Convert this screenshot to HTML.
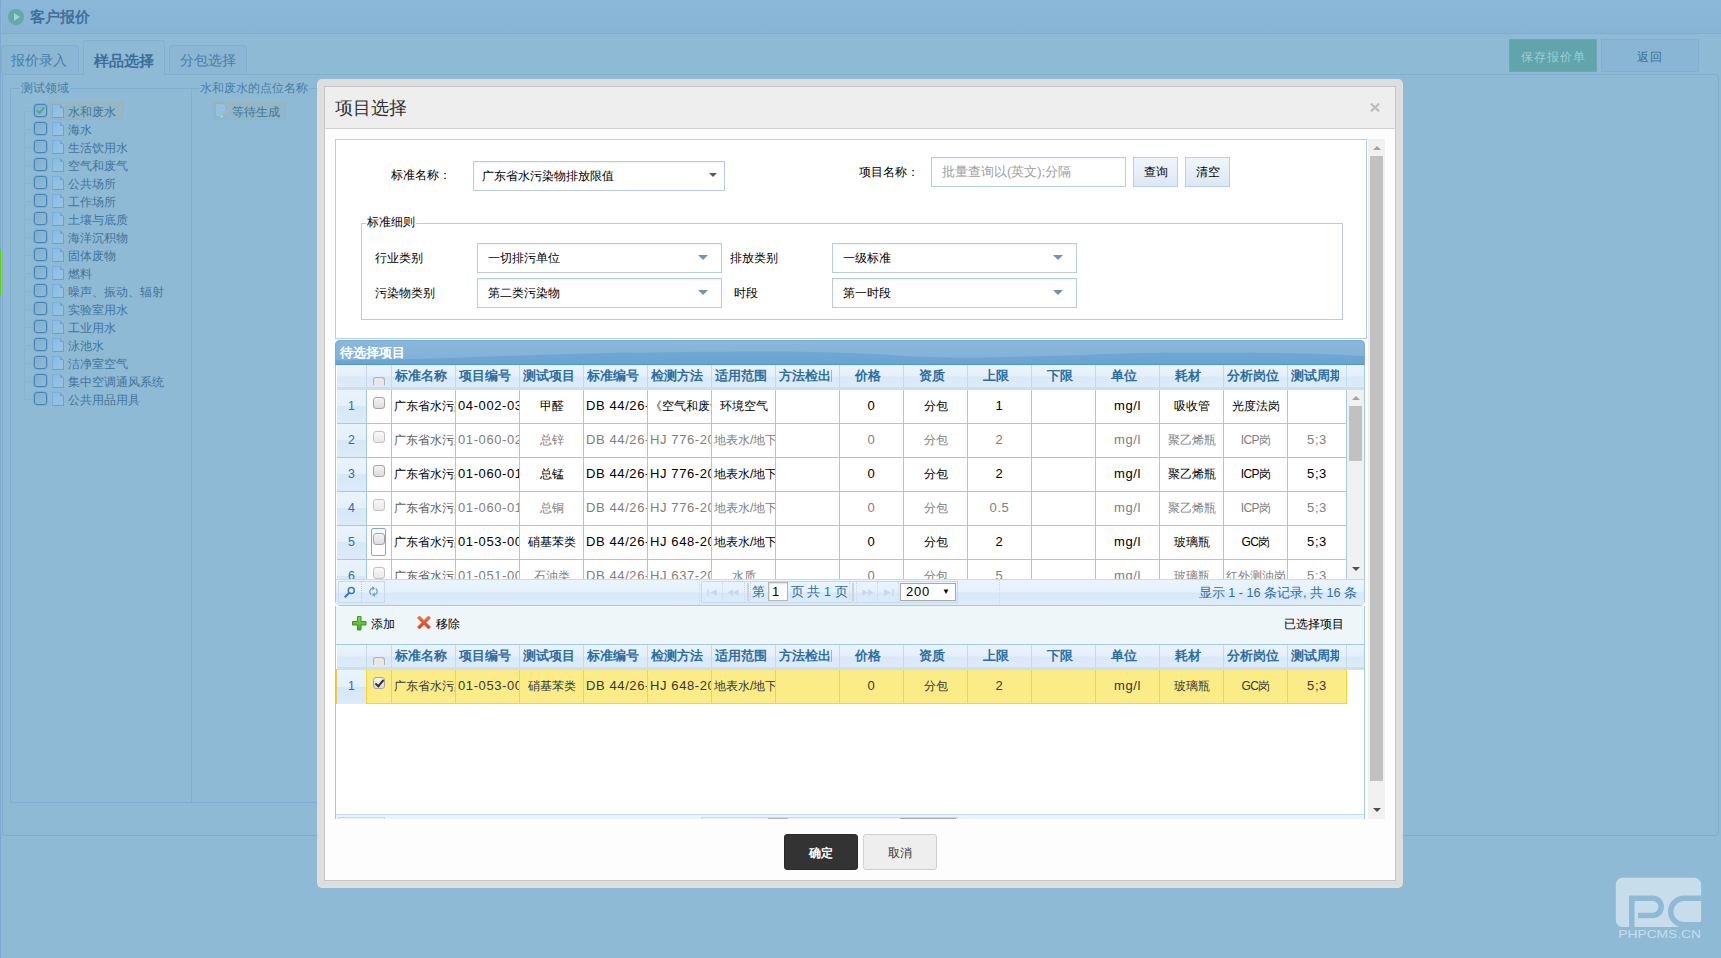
<!DOCTYPE html>
<html lang="zh"><head><meta charset="utf-8"><title>客户报价</title>
<style>
*{box-sizing:border-box}
html,body{margin:0;padding:0}
body{width:1721px;height:958px;overflow:hidden;position:relative;background:#8ebad6;font-family:"Liberation Sans",sans-serif;font-size:12px;color:#42749b}
.abs{position:absolute}
.j{display:inline-block;text-align:justify;text-align-last:justify;white-space:nowrap;text-indent:0;vertical-align:baseline}
/* ---------- background page (already tinted by overlay) ---------- */
#lstrip{left:0;top:0;width:1px;height:958px;background:#7daace}
#gbar{left:0;top:249px;width:1px;height:46px;background:#5fd010}
#tbar{left:2px;top:0;width:1719px;height:34px;background:linear-gradient(#8bb7d8,#87b3d4);border-bottom:1px solid #7fadce}
#tico{left:8px;top:9px;width:16px;height:16px;border-radius:8px;background:#64a9a6}
#tico:after{content:"";position:absolute;left:6px;top:4px;border-left:6px solid #a9cde0;border-top:4px solid transparent;border-bottom:4px solid transparent}
#ttxt{left:30px;top:7px;font-size:15px;font-weight:bold;color:#41719a;line-height:19px;white-space:nowrap}
.tab{position:absolute;border:1px solid #80aed0;border-bottom:none;border-radius:4px 4px 0 0;background:#8bb7d4;color:#4a7da5;font-size:14px;text-align:center;white-space:nowrap}
#tab1{left:1px;top:45px;width:78px;height:29px;line-height:28px;text-indent:-2px}
#tab2{left:83px;top:40px;width:82px;height:35px;line-height:39px;background:#8ebad6;font-size:15px;font-weight:bold;color:#3e6e98;border-color:#82b0d1;z-index:2}
#tab3{left:169px;top:45px;width:78px;height:29px;line-height:28px}
#panel{left:2px;top:74px;width:1717px;height:762px;border:1px solid #80aecf;border-radius:0 4px 4px 4px}
#btnsave{left:1509px;top:39px;width:88px;height:33px;background:#61a4ab;border:1px solid #68a9b2;color:#9fcdd5;text-align:center;line-height:34px;letter-spacing:1px;font-size:12px}
#btnback{left:1601px;top:39px;width:98px;height:33px;background:#89b6d5;border:1px solid #80afd0;color:#3f6f93;text-align:center;line-height:34px;letter-spacing:1px;font-size:12px}
.fs{position:absolute;border:1px solid #7faed0}
.lg{position:absolute;top:-8px;background:#8ebad6;padding:0 1px;font-size:12px;line-height:14px;color:#4a7da5;white-space:nowrap}
.tn{position:absolute;left:0;height:18px;white-space:nowrap}
.tn .ck{position:absolute;left:34px;top:0;width:13px;height:13px;border:1px solid #4583b4;border-radius:3px;background:linear-gradient(135deg,#82aecd,#8fbad6);box-shadow:0 0 0 0.5px #6a9fc8}
.tn .dc{position:absolute;left:52px;top:0;width:12px;height:14px;background:linear-gradient(135deg,#8cbbe0,#98c3e5);border:1px solid #7aaedb;border-right-color:#6a9fcf;border-bottom-color:#6a9fcf;border-radius:1px}
.tn .dc:after{content:"";position:absolute;right:-1px;top:-1px;border-left:4px solid #6fa5d0;border-top:4px solid #8ebad6}
.tn .tx{position:absolute;left:68px;top:1px;line-height:14px;font-size:12px;color:#42749b}
.tn .hl{position:absolute;left:24px;top:7px;width:9px;border-top:1px dotted #83afce}
.sel{position:absolute;background:#91b7c8;border:1px solid #98b5b3}
</style></head><body>
<div id="tbar" class="abs"></div>
<div id="lstrip" class="abs"></div>
<div id="gbar" class="abs"></div>
<div id="tico" class="abs"></div>
<div id="ttxt" class="abs"><span class="j" style="width: 60px;">客户报价</span></div>
<div id="panel" class="abs"></div>
<div id="tab1" class="tab"><span class="j" style="width: 56px;">报价录入</span></div>
<div id="tab2" class="tab"><span class="j" style="width: 60px;">样品选择</span></div>
<div id="tab3" class="tab"><span class="j" style="width: 56px;">分包选择</span></div>
<div id="btnsave" class="abs"><span class="j" style="width: 65px;">保存报价单</span></div>
<div id="btnback" class="abs"><span class="j" style="width: 26px;">返回</span></div>
<div class="fs" style="left:10px;top:88px;width:182px;height:715px"><div class="lg" style="left:9px"><span class="j" style="width: 48px;">测试领域</span></div></div>
<div class="fs" style="left:191px;top:88px;width:900px;height:715px"><div class="lg" style="left:7px"><span class="j" style="width: 108px;">水和废水的点位名称</span></div></div>
<div class="abs" style="left:24px;top:112px;height:288px;border-left:1px dotted #83afce"></div>
<div class="sel" style="left:50px;top:102px;width:73px;height:18px"></div>
<div class="sel" style="left:213px;top:102px;width:73px;height:18px"></div>
<div class="tn" style="top:104px"><span class="hl"></span><span class="ck"><svg width="11" height="11" viewBox="0 0 11 11" style="position:absolute;left:0;top:0"><path d="M2 5.5 L4.5 8 L9 2.5" fill="none" stroke="#4fa98c" stroke-width="2"></path></svg></span><span class="dc"></span><span class="tx"><span class="j" style="width: 48px;">水和废水</span></span></div><div class="tn" style="top:122px"><span class="hl"></span><span class="ck"></span><span class="dc"></span><span class="tx"><span class="j" style="width: 24px;">海水</span></span></div><div class="tn" style="top:140px"><span class="hl"></span><span class="ck"></span><span class="dc"></span><span class="tx"><span class="j" style="width: 60px;">生活饮用水</span></span></div><div class="tn" style="top:158px"><span class="hl"></span><span class="ck"></span><span class="dc"></span><span class="tx"><span class="j" style="width: 60px;">空气和废气</span></span></div><div class="tn" style="top:176px"><span class="hl"></span><span class="ck"></span><span class="dc"></span><span class="tx"><span class="j" style="width: 48px;">公共场所</span></span></div><div class="tn" style="top:194px"><span class="hl"></span><span class="ck"></span><span class="dc"></span><span class="tx"><span class="j" style="width: 48px;">工作场所</span></span></div><div class="tn" style="top:212px"><span class="hl"></span><span class="ck"></span><span class="dc"></span><span class="tx"><span class="j" style="width: 60px;">土壤与底质</span></span></div><div class="tn" style="top:230px"><span class="hl"></span><span class="ck"></span><span class="dc"></span><span class="tx"><span class="j" style="width: 60px;">海洋沉积物</span></span></div><div class="tn" style="top:248px"><span class="hl"></span><span class="ck"></span><span class="dc"></span><span class="tx"><span class="j" style="width: 48px;">固体废物</span></span></div><div class="tn" style="top:266px"><span class="hl"></span><span class="ck"></span><span class="dc"></span><span class="tx"><span class="j" style="width: 24px;">燃料</span></span></div><div class="tn" style="top:284px"><span class="hl"></span><span class="ck"></span><span class="dc"></span><span class="tx"><span class="j" style="width: 96px;">噪声、振动、辐射</span></span></div><div class="tn" style="top:302px"><span class="hl"></span><span class="ck"></span><span class="dc"></span><span class="tx"><span class="j" style="width: 60px;">实验室用水</span></span></div><div class="tn" style="top:320px"><span class="hl"></span><span class="ck"></span><span class="dc"></span><span class="tx"><span class="j" style="width: 48px;">工业用水</span></span></div><div class="tn" style="top:338px"><span class="hl"></span><span class="ck"></span><span class="dc"></span><span class="tx"><span class="j" style="width: 36px;">泳池水</span></span></div><div class="tn" style="top:356px"><span class="hl"></span><span class="ck"></span><span class="dc"></span><span class="tx"><span class="j" style="width: 60px;">洁净室空气</span></span></div><div class="tn" style="top:374px"><span class="hl"></span><span class="ck"></span><span class="dc"></span><span class="tx"><span class="j" style="width: 96px;">集中空调通风系统</span></span></div><div class="tn" style="top:392px"><span class="hl"></span><span class="ck"></span><span class="dc"></span><span class="tx"><span class="j" style="width: 72px;">公共用品用具</span></span></div><svg class="abs" style="left:215px;top:103px" width="15" height="16" viewBox="0 0 15 16">
<path d="M0.5 0.5 H7.5 L11 4 V13.5 H0.5 Z" fill="#95c0e0" stroke="#7fb3d9"></path>
<path d="M7.5 0.5 V4 H11 Z" fill="#aacfe8" stroke="#7fb3d9" stroke-width="0.6"></path>
<path d="M12.3 7.8 L6.8 13.2" stroke="#a1b5c6" stroke-width="3" stroke-linecap="round"></path>
<circle cx="6.6" cy="13.2" r="1.7" fill="#b3d3d6" stroke="#8cc394" stroke-width="0.9"></circle>
</svg>
<div class="abs" style="left:232px;top:105px;line-height:14px;font-size:12px;color:#42749b;white-space:nowrap"><span class="j" style="width: 48px;">等待生成</span></div>
<svg class="abs" style="left:1615px;top:877px" width="90" height="66" viewBox="0 0 90 66">
<rect x="0.8" y="0.8" width="85.4" height="49.2" rx="6.7" fill="#c8ddeb"></rect>
<path d="M23 38.5 H37.6 A8.6 8.6 0 0 0 37.6 21.3 H16.8 V50.5" fill="none" stroke="#8ebad6" stroke-width="5.5"></path>
<path d="M86.5 21.3 H69 A13.25 13.25 0 0 0 69 47.8 H86.5" fill="none" stroke="#8ebad6" stroke-width="5.5"></path>
<rect x="60" y="50" width="28" height="3" fill="#8ebad6"></rect>
<text x="3.3" y="61" font-family="Liberation Sans" font-size="11" fill="#c8ddeb" textLength="82.7" lengthAdjust="spacingAndGlyphs">PHPCMS.CN</text>
</svg>
<style>
#mo{left:317px;top:79px;width:1086px;height:809px;background:#dedede;border-radius:5px}
#mi{left:324px;top:86px;width:1072px;height:795px;background:#fdfdfd;border:1px solid #c6c6c6}
#mh{left:325px;top:87px;width:1070px;height:42px;background:#eeeeee;border-bottom:1px solid #cfcfcf}
#mt{left:335px;top:96px;font-size:18px;line-height:24px;color:#333;white-space:nowrap}
#mx{left:1368px;top:96px;font-size:20px;line-height:22px;font-weight:bold;color:#b4b4b4}
.k{color:#000}
#box1{left:335px;top:139px;width:1032px;height:200px;background:#fff;border:1px solid #b5cfe6}
.lbl{position:absolute;font-size:12px;line-height:14px;color:#000;white-space:nowrap}
.selb{position:absolute;height:30px;background:#fff;border:1px solid #b8ccdd;font-size:12px;line-height:28px;color:#000;padding-left:9px;white-space:nowrap;box-shadow:inset 0 1px 2px #eef3f8}
.selb:after{content:"";position:absolute;right:13px;top:11px;border-top:5px solid #6f93bd;border-left:5px solid transparent;border-right:5px solid transparent}
.btn{position:absolute;height:30px;width:45px;border:1px solid #b9cfe6;background:linear-gradient(#f0f5fb,#dce8f5);font-size:12px;line-height:28px;color:#000;text-align:center}
.selb.s1:after{right:7px;top:11px;border-top:4px solid #5a5a5a;border-left:4px solid transparent;border-right:4px solid transparent}
#fs2{left:361px;top:223px;width:982px;height:97px;border:1px solid #b8ccdd}
/* scrollbar */
#sb{left:1368px;top:139px;width:17px;height:680px;background:#f1f1f1}
#sbt{left:1370px;top:156px;width:13px;height:625px;background:#c1c1c1}
.arr{position:absolute;width:0;height:0;border-left:4px solid transparent;border-right:4px solid transparent}
/* grid */
.gcap{position:absolute;left:335px;width:1030px;height:25px;background:linear-gradient(#74aad5,#6ba4d1);border:1px solid #78acd8;border-bottom-color:#4f95d0;border-radius:5px 5px 0 0;overflow:hidden;color:#fff;font-weight:bold;font-size:13px;line-height:24px;padding-left:4px}
.ghdr{position:absolute;left:337px;width:1027px;height:25px;background:linear-gradient(#e9f3fc 0px,#e5f0fb 11px,#d7e8f7 12px,#deecf9 22px,#cfdfee 22.5px,#cfdfee 25px);overflow:hidden}
.hc{position:absolute;top:0;height:23px;border-right:1px solid #c5dbec;font-size:13px;font-weight:bold;color:#2e6e9e;line-height:21px;white-space:nowrap;overflow:hidden;padding:0 7px 0 3px}
.hc>span{display:block;overflow:hidden}
.hcb{position:absolute;left:6px;top:12px;width:12px;height:8px;border:1px solid #b0b0b0;border-bottom:none;border-radius:3px 3px 0 0;background:#e8e8e8}
.gbody{position:absolute;left:337px;width:1027px;background:#fff;overflow:hidden}
.grow{position:absolute;left:0;width:1010px;height:34px;border-bottom:1px solid #a6c9e2;color:#000;background:#fff}
.grow.dim{color:#808080}.grow.dim .c0{color:#5c5c5c}
.grow.hi{background:#fbec88;border-bottom:1px solid #fad42e;border-top:1px solid #fbe983;color:#363636}
.gc{position:absolute;top:0;height:33px;border-right:1px solid #a6c9e2;font-size:13px;line-height:32px;white-space:nowrap;overflow:hidden;padding:0 2px}
.gc{font-size:12.3px}.gc.mix{letter-spacing:-0.6px;font-size:12px}.gc.lat{letter-spacing:0.6px;font-size:13px}
.grow.hi .gc{border-right-color:#fad42e;top:-1px;height:34px}
.gc.rn{background:linear-gradient(#e9f3fc 0%,#e4f0fb 49%,#d6e7f7 50%,#dcebf9 100%);color:#2e6e9e;text-align:center}
.cb{position:absolute;left:6px;top:7px;width:12px;height:12px;border:1px solid #a5a5a5;border-radius:3px;background:linear-gradient(#f4f4f4,#dcdcdc)}
.cb.on:after{content:"";position:absolute;left:3px;top:0px;width:3px;height:7px;border:solid #333;border-width:0 2px 2px 0;transform:rotate(40deg)}
.grow.dim .cb{border-color:#c2c2c2;background:linear-gradient(#f8f8f8,#e8e8e8)}
.cbf{position:absolute;left:4px;top:2px;width:15px;height:28px;border:1px solid #7aa7e8;border-radius:2px}
.pg{position:absolute;left:336px;width:1028px;height:26px;background:linear-gradient(#eaf4fd 0px,#e5f1fb 12px,#d7e8f7 13px,#deecf9 26px);border-top:1px solid #c5dbec}
.pt{position:absolute;color:#2e6e9e;font-size:13px;line-height:16px;white-space:nowrap}
.vd{position:absolute;top:582px;width:0;height:20px;border-left:1px dotted #c5dbec}
.vs{position:absolute;top:583px;width:2px;height:18px;background:#d3d3d3}
</style>
<div id="mo" class="abs"></div><div id="mi" class="abs"></div><div id="mh" class="abs"></div>
<div id="mt" class="abs"><span class="j" style="width: 72px;">项目选择</span></div><svg class="abs" style="left:1370px;top:103px" width="10" height="9" viewBox="0 0 10 9"><path d="M0.9 0.7 L9.1 8.3 M9.1 0.7 L0.9 8.3" stroke="#bcbcbc" stroke-width="2.2"></path></svg>
<div id="box1" class="abs"></div>
<div class="lbl" style="left:391px;top:168px"><span class="j" style="width: 60px;">标准名称：</span></div>
<div class="selb s1" style="left:473px;top:161px;width:252px;padding-left:8px"><span class="j" style="width: 132px;">广东省水污染物排放限值</span></div>
<div class="lbl" style="left:859px;top:165px"><span class="j" style="width: 60px;">项目名称：</span></div>
<div class="abs" style="left:931px;top:157px;width:195px;height:30px;border:1px solid #b5cfe6;background:#fff;font-size:13px;line-height:28px;color:#a0a0a0;padding-left:10px;white-space:nowrap;box-shadow:inset 0 1px 2px #eef3f8"><span class="j" style="width: 129.3px;">批量查询以(英文);分隔</span></div>
<div class="btn" style="left:1133px;top:157px"><span class="j" style="width: 24px;">查询</span></div>
<div class="btn" style="left:1185px;top:157px"><span class="j" style="width: 24px;">清空</span></div>
<div id="fs2" class="abs"></div>
<div class="lbl" style="left:366px;top:215px;background:#fff;padding:0 1px"><span class="j" style="width: 48px;">标准细则</span></div>
<div class="lbl" style="left:375px;top:251px"><span class="j" style="width: 48px;">行业类别</span></div>
<div class="selb" style="left:477px;top:243px;width:245px;padding-left:10px"><span class="j" style="width: 72px;">一切排污单位</span></div>
<div class="lbl" style="left:730px;top:251px"><span class="j" style="width: 48px;">排放类别</span></div>
<div class="selb" style="left:832px;top:243px;width:245px;padding-left:10px"><span class="j" style="width: 48px;">一级标准</span></div>
<div class="lbl" style="left:375px;top:286px"><span class="j" style="width: 60px;">污染物类别</span></div>
<div class="selb" style="left:477px;top:278px;width:245px;padding-left:10px"><span class="j" style="width: 72px;">第二类污染物</span></div>
<div class="lbl" style="left:734px;top:286px"><span class="j" style="width: 24px;">时段</span></div>
<div class="selb" style="left:832px;top:278px;width:245px;padding-left:10px"><span class="j" style="width: 48px;">第一时段</span></div>
<div id="sb" class="abs"></div><div id="sbt" class="abs"></div>
<div class="arr" style="left:1372.5px;top:146px;border-bottom:4px solid #a3a3a3"></div>
<div class="arr" style="left:1372.5px;top:808px;border-top:4px solid #505050"></div>
<div class="abs" style="left:335px;top:340px;width:1030px;height:266px;border:1px solid #a6c9e2;border-radius:5px;background:#fff"></div><div class="gcap" style="top:340px"><svg style="position:absolute;left:0;top:0" width="1028" height="23" viewBox="0 0 1028 23" preserveAspectRatio="none"><defs><linearGradient id="gl" x1="0" y1="0" x2="0" y2="1"><stop offset="0" stop-color="#8ab7db"></stop><stop offset="1" stop-color="#82b1d8"></stop></linearGradient></defs><path d="M0 0 H1028 V15 C1000 13.5 980 12.5 950 12.2 C900 11.5 880 11.2 846 11.5 C790 12 750 14 700 15.2 C660 16.3 630 16.8 604 16.3 C570 15.6 545 13 514 12 C470 10.6 440 10.3 400 10.6 C350 11 310 11.5 264 12.2 C200 13.5 150 16 100 17.2 C60 18.3 30 19 0 19.2 Z" fill="url(#gl)"></path></svg><span style="position:relative"><span class="j" style="width: 65px;">待选择项目</span></span></div><div class="ghdr" style="top:365px"><div class="hc" style="left:0;width:30px"></div><div class="hc" style="left:30px;width:25px"><span class="hcb"></span></div><div class="hc" style="left:55px;width:64px;text-align:left"><span><span class="j" style="width: 52px;">标准名称</span></span></div><div class="hc" style="left:119px;width:64px;text-align:left"><span><span class="j" style="width: 52px;">项目编号</span></span></div><div class="hc" style="left:183px;width:64px;text-align:left"><span><span class="j" style="width: 52px;">测试项目</span></span></div><div class="hc" style="left:247px;width:64px;text-align:left"><span><span class="j" style="width: 52px;">标准编号</span></span></div><div class="hc" style="left:311px;width:64px;text-align:left"><span><span class="j" style="width: 52px;">检测方法</span></span></div><div class="hc" style="left:375px;width:64px;text-align:left"><span><span class="j" style="width: 52px;">适用范围</span></span></div><div class="hc" style="left:439px;width:64px;text-align:left"><span><span class="j" style="width: 65px;">方法检出限</span></span></div><div class="hc" style="left:503px;width:64px;text-align:center;padding:0 9px 0 1px"><span><span class="j" style="width: 26px;">价格</span></span></div><div class="hc" style="left:567px;width:64px;text-align:center;padding:0 9px 0 1px"><span><span class="j" style="width: 26px;">资质</span></span></div><div class="hc" style="left:631px;width:64px;text-align:center;padding:0 9px 0 1px"><span><span class="j" style="width: 26px;">上限</span></span></div><div class="hc" style="left:695px;width:64px;text-align:center;padding:0 9px 0 1px"><span><span class="j" style="width: 26px;">下限</span></span></div><div class="hc" style="left:759px;width:64px;text-align:center;padding:0 9px 0 1px"><span><span class="j" style="width: 26px;">单位</span></span></div><div class="hc" style="left:823px;width:64px;text-align:center;padding:0 9px 0 1px"><span><span class="j" style="width: 26px;">耗材</span></span></div><div class="hc" style="left:887px;width:64px;text-align:left"><span><span class="j" style="width: 52px;">分析岗位</span></span></div><div class="hc" style="left:951px;width:59px;text-align:left"><span><span class="j" style="width: 52px;">测试周期</span></span></div></div><div class="gbody" style="top:390px;height:189px"><div class="grow " style="top:0px"><div class="gc rn" style="left:0;width:30px">1</div><div class="gc cbc" style="left:30px;width:25px"><span class="cb"></span></div><div class="gc c0" style="left:55px;width:64px;text-align:left"><span class="j" style="width: 72px;">广东省水污染</span></div><div class="gc lat" style="left:119px;width:64px;text-align:left">04-002-03</div><div class="gc" style="left:183px;width:64px;text-align:center"><span class="j" style="width: 24px;">甲醛</span></div><div class="gc lat" style="left:247px;width:64px;text-align:left">DB 44/26-</div><div class="gc" style="left:311px;width:64px;text-align:left"><span class="j" style="width: 72px;">《空气和废气</span></div><div class="gc" style="left:375px;width:64px;text-align:center"><span class="j" style="width: 48px;">环境空气</span></div><div class="gc" style="left:439px;width:64px;text-align:center"></div><div class="gc lat" style="left:503px;width:64px;text-align:center">0</div><div class="gc" style="left:567px;width:64px;text-align:center"><span class="j" style="width: 24px;">分包</span></div><div class="gc lat" style="left:631px;width:64px;text-align:center">1</div><div class="gc" style="left:695px;width:64px;text-align:center"></div><div class="gc lat" style="left:759px;width:64px;text-align:center">mg/l</div><div class="gc" style="left:823px;width:64px;text-align:center"><span class="j" style="width: 36px;">吸收管</span></div><div class="gc" style="left:887px;width:64px;text-align:center"><span class="j" style="width: 48px;">光度法岗</span></div><div class="gc" style="left:951px;width:59px;text-align:center"></div></div><div class="grow dim" style="top:34px"><div class="gc rn" style="left:0;width:30px">2</div><div class="gc cbc" style="left:30px;width:25px"><span class="cb"></span></div><div class="gc c0" style="left:55px;width:64px;text-align:left"><span class="j" style="width: 72px;">广东省水污染</span></div><div class="gc lat" style="left:119px;width:64px;text-align:left">01-060-02</div><div class="gc" style="left:183px;width:64px;text-align:center"><span class="j" style="width: 24px;">总锌</span></div><div class="gc lat" style="left:247px;width:64px;text-align:left">DB 44/26-</div><div class="gc lat" style="left:311px;width:64px;text-align:left">HJ 776-20</div><div class="gc" style="left:375px;width:64px;text-align:left"><span class="j" style="width: 63.4px;">地表水/地下</span></div><div class="gc" style="left:439px;width:64px;text-align:center"></div><div class="gc lat" style="left:503px;width:64px;text-align:center">0</div><div class="gc" style="left:567px;width:64px;text-align:center"><span class="j" style="width: 24px;">分包</span></div><div class="gc lat" style="left:631px;width:64px;text-align:center">2</div><div class="gc" style="left:695px;width:64px;text-align:center"></div><div class="gc lat" style="left:759px;width:64px;text-align:center">mg/l</div><div class="gc" style="left:823px;width:64px;text-align:center"><span class="j" style="width: 48px;">聚乙烯瓶</span></div><div class="gc mix" style="left:887px;width:64px;text-align:center"><span class="j" style="width: 29.6px;">ICP岗</span></div><div class="gc lat" style="left:951px;width:59px;text-align:center">5;3</div></div><div class="grow " style="top:68px"><div class="gc rn" style="left:0;width:30px">3</div><div class="gc cbc" style="left:30px;width:25px"><span class="cb"></span></div><div class="gc c0" style="left:55px;width:64px;text-align:left"><span class="j" style="width: 72px;">广东省水污染</span></div><div class="gc lat" style="left:119px;width:64px;text-align:left">01-060-01</div><div class="gc" style="left:183px;width:64px;text-align:center"><span class="j" style="width: 24px;">总锰</span></div><div class="gc lat" style="left:247px;width:64px;text-align:left">DB 44/26-</div><div class="gc lat" style="left:311px;width:64px;text-align:left">HJ 776-20</div><div class="gc" style="left:375px;width:64px;text-align:left"><span class="j" style="width: 63.4px;">地表水/地下</span></div><div class="gc" style="left:439px;width:64px;text-align:center"></div><div class="gc lat" style="left:503px;width:64px;text-align:center">0</div><div class="gc" style="left:567px;width:64px;text-align:center"><span class="j" style="width: 24px;">分包</span></div><div class="gc lat" style="left:631px;width:64px;text-align:center">2</div><div class="gc" style="left:695px;width:64px;text-align:center"></div><div class="gc lat" style="left:759px;width:64px;text-align:center">mg/l</div><div class="gc" style="left:823px;width:64px;text-align:center"><span class="j" style="width: 48px;">聚乙烯瓶</span></div><div class="gc mix" style="left:887px;width:64px;text-align:center"><span class="j" style="width: 29.6px;">ICP岗</span></div><div class="gc lat" style="left:951px;width:59px;text-align:center">5;3</div></div><div class="grow dim" style="top:102px"><div class="gc rn" style="left:0;width:30px">4</div><div class="gc cbc" style="left:30px;width:25px"><span class="cb"></span></div><div class="gc c0" style="left:55px;width:64px;text-align:left"><span class="j" style="width: 72px;">广东省水污染</span></div><div class="gc lat" style="left:119px;width:64px;text-align:left">01-060-01</div><div class="gc" style="left:183px;width:64px;text-align:center"><span class="j" style="width: 24px;">总铜</span></div><div class="gc lat" style="left:247px;width:64px;text-align:left">DB 44/26-</div><div class="gc lat" style="left:311px;width:64px;text-align:left">HJ 776-20</div><div class="gc" style="left:375px;width:64px;text-align:left"><span class="j" style="width: 63.4px;">地表水/地下</span></div><div class="gc" style="left:439px;width:64px;text-align:center"></div><div class="gc lat" style="left:503px;width:64px;text-align:center">0</div><div class="gc" style="left:567px;width:64px;text-align:center"><span class="j" style="width: 24px;">分包</span></div><div class="gc lat" style="left:631px;width:64px;text-align:center">0.5</div><div class="gc" style="left:695px;width:64px;text-align:center"></div><div class="gc lat" style="left:759px;width:64px;text-align:center">mg/l</div><div class="gc" style="left:823px;width:64px;text-align:center"><span class="j" style="width: 48px;">聚乙烯瓶</span></div><div class="gc mix" style="left:887px;width:64px;text-align:center"><span class="j" style="width: 29.6px;">ICP岗</span></div><div class="gc lat" style="left:951px;width:59px;text-align:center">5;3</div></div><div class="grow " style="top:136px"><div class="gc rn" style="left:0;width:30px">5</div><div class="gc cbc" style="left:30px;width:25px"><span class="cbf"></span><span class="cb"></span></div><div class="gc c0" style="left:55px;width:64px;text-align:left"><span class="j" style="width: 72px;">广东省水污染</span></div><div class="gc lat" style="left:119px;width:64px;text-align:left">01-053-00</div><div class="gc" style="left:183px;width:64px;text-align:center"><span class="j" style="width: 48px;">硝基苯类</span></div><div class="gc lat" style="left:247px;width:64px;text-align:left">DB 44/26-</div><div class="gc lat" style="left:311px;width:64px;text-align:left">HJ 648-20</div><div class="gc" style="left:375px;width:64px;text-align:left"><span class="j" style="width: 63.4px;">地表水/地下</span></div><div class="gc" style="left:439px;width:64px;text-align:center"></div><div class="gc lat" style="left:503px;width:64px;text-align:center">0</div><div class="gc" style="left:567px;width:64px;text-align:center"><span class="j" style="width: 24px;">分包</span></div><div class="gc lat" style="left:631px;width:64px;text-align:center">2</div><div class="gc" style="left:695px;width:64px;text-align:center"></div><div class="gc lat" style="left:759px;width:64px;text-align:center">mg/l</div><div class="gc" style="left:823px;width:64px;text-align:center"><span class="j" style="width: 36px;">玻璃瓶</span></div><div class="gc mix" style="left:887px;width:64px;text-align:center"><span class="j" style="width: 28.2px;">GC岗</span></div><div class="gc lat" style="left:951px;width:59px;text-align:center">5;3</div></div><div class="grow dim" style="top:170px"><div class="gc rn" style="left:0;width:30px">6</div><div class="gc cbc" style="left:30px;width:25px"><span class="cb"></span></div><div class="gc c0" style="left:55px;width:64px;text-align:left"><span class="j" style="width: 72px;">广东省水污染</span></div><div class="gc lat" style="left:119px;width:64px;text-align:left">01-051-00</div><div class="gc" style="left:183px;width:64px;text-align:center"><span class="j" style="width: 36px;">石油类</span></div><div class="gc lat" style="left:247px;width:64px;text-align:left">DB 44/26-</div><div class="gc lat" style="left:311px;width:64px;text-align:left">HJ 637-20</div><div class="gc" style="left:375px;width:64px;text-align:center"><span class="j" style="width: 24px;">水质</span></div><div class="gc" style="left:439px;width:64px;text-align:center"></div><div class="gc lat" style="left:503px;width:64px;text-align:center">0</div><div class="gc" style="left:567px;width:64px;text-align:center"><span class="j" style="width: 24px;">分包</span></div><div class="gc lat" style="left:631px;width:64px;text-align:center">5</div><div class="gc" style="left:695px;width:64px;text-align:center"></div><div class="gc lat" style="left:759px;width:64px;text-align:center">mg/l</div><div class="gc" style="left:823px;width:64px;text-align:center"><span class="j" style="width: 36px;">玻璃瓶</span></div><div class="gc" style="left:887px;width:64px;text-align:center"><span class="j" style="width: 60px;">红外测油岗</span></div><div class="gc lat" style="left:951px;width:59px;text-align:center">5;3</div></div><div class="abs" style="left:1010px;top:0;width:17px;height:189px;background:#f1f1f1"></div><div class="abs" style="left:1012px;top:16px;width:13px;height:55px;background:#c1c1c1"></div><div class="arr" style="left:1014.5px;top:6px;border-bottom:4px solid #a3a3a3"></div><div class="arr" style="left:1014.5px;top:177px;border-top:4px solid #505050"></div></div><div class="pg" style="top:579px"></div>
<div class="abs" style="left:338px;top:581px;width:47px;height:22px;border:1px solid #c5dbec"></div>
<div class="abs" style="left:361px;top:581px;width:0;height:22px;border-left:1px dotted #b5cde2"></div>
<svg class="abs" style="left:344px;top:586px" width="12" height="12" viewBox="0 0 12 12"><circle cx="7.3" cy="4.6" r="3" fill="#eef5fc" stroke="#3a7ab0" stroke-width="1.5"></circle><path d="M5 7 L1.3 10.7" stroke="#3a7ab0" stroke-width="2" stroke-linecap="round"></path></svg>
<svg class="abs" style="left:368px;top:585px" width="11" height="13" viewBox="0 0 11 13"><path d="M4.4 3.2 A3.5 3.5 0 0 0 3.2 9.4" fill="none" stroke="#6a9fd0" stroke-width="1.3"></path><path d="M6.6 9.8 A3.5 3.5 0 0 0 7.8 3.6" fill="none" stroke="#6a9fd0" stroke-width="1.3"></path><path d="M4.2 0.9 L7.2 3.2 L4.2 5.5Z" fill="#6a9fd0"></path><path d="M6.8 12.1 L3.8 9.8 L6.8 7.5Z" fill="#6a9fd0"></path></svg>
<div class="abs" style="left:699px;top:580px;width:0;height:25px;border-left:1px dotted #c5dbec"></div>
<div class="abs" style="left:999px;top:580px;width:0;height:25px;border-left:1px dotted #c5dbec"></div>
<div class="abs" style="left:701px;top:581px;width:257px;height:22px;border:1px solid #c5dbec"></div>
<div class="vd" style="left:722px"></div><div class="vd" style="left:744px"></div><div class="vs" style="left:747px"></div><div class="vd" style="left:750px"></div>
<div class="vd" style="left:849px"></div><div class="vs" style="left:852px"></div><div class="vd" style="left:856px"></div><div class="vd" style="left:877px"></div><div class="vd" style="left:898px"></div>
<svg class="abs" style="left:707px;top:588px" width="11" height="9" viewBox="0 0 11 9"><path d="M1 1 V8" stroke="#c3d9ec" stroke-width="1.4"></path><path d="M10 1.2 V7.8 L3 4.5Z" fill="#c3d9ec"></path></svg>
<svg class="abs" style="left:727px;top:588px" width="12" height="9" viewBox="0 0 12 9"><path d="M6 1.2 V7.8 L0.5 4.5Z" fill="#c3d9ec"></path><path d="M11.5 1.2 V7.8 L6 4.5Z" fill="#c3d9ec"></path></svg>
<svg class="abs" style="left:862px;top:588px" width="12" height="9" viewBox="0 0 12 9"><path d="M0.5 1.2 V7.8 L6 4.5Z" fill="#c3d9ec"></path><path d="M6 1.2 V7.8 L11.5 4.5Z" fill="#c3d9ec"></path></svg>
<svg class="abs" style="left:883px;top:588px" width="11" height="9" viewBox="0 0 11 9"><path d="M10 1 V8" stroke="#c3d9ec" stroke-width="1.4"></path><path d="M1 1.2 V7.8 L8 4.5Z" fill="#c3d9ec"></path></svg>
<div class="pt" style="left:752px;top:584px"><span class="j" style="width: 13px;">第</span></div>
<div class="abs" style="left:768px;top:582px;width:20px;height:19px;border:1px solid #b5b5b5;background:#fff;color:#000;font-size:13px;line-height:17px;padding-left:3px;box-shadow:inset 1px 1px 1px #e4e4e4">1</div>
<div class="pt" style="left:791px;top:584px;font-size:12.6px"><span class="j" style="width: 56.5px;">页 共 1 页</span></div>
<div class="abs" style="left:900px;top:583px;width:56px;height:18px;border:1px solid #a9a9a9;background:#fff;color:#000;font-size:13px;line-height:16px;padding-left:5px;letter-spacing:0.8px">200<span style="position:absolute;right:5px;top:0;font-size:8px;letter-spacing:0">▼</span></div>
<div class="pt" style="right:364px;top:585px;font-size:12.6px"><span class="j" style="width: 158.2px;">显示 1 - 16 条记录, 共 16 条</span></div>
<div class="abs" style="left:335px;top:606px;width:1030px;height:39px;background:#eff6fa;border-left:1px solid #a6c9e2;border-right:1px solid #a6c9e2"></div>
<svg class="abs" style="left:351px;top:615px" width="16" height="16" viewBox="0 0 16 16"><defs><linearGradient id="gp" x1="0" y1="0" x2="0" y2="1"><stop offset="0" stop-color="#8fd85a"></stop><stop offset="1" stop-color="#3fa51c"></stop></linearGradient><linearGradient id="gx" x1="0" y1="0" x2="0" y2="1"><stop offset="0" stop-color="#f4754c"></stop><stop offset="1" stop-color="#d93a1c"></stop></linearGradient></defs><path d="M6.5 1.5 H10 V6.5 H15 V10 H10 V15 H6.5 V10 H1.5 V6.5 H6.5 Z" fill="url(#gp)" stroke="#3a961a" stroke-width="1"></path></svg>
<div class="lbl" style="left:371px;top:617px"><span class="j" style="width: 24px;">添加</span></div>
<svg class="abs" style="left:416px;top:615px" width="16" height="15" viewBox="0 0 16 15"><path d="M1.5 3 L3.5 1 L8 5.5 L12.5 1 L14.5 3 L10 7.5 L14.5 12 L12.5 14 L8 9.5 L3.5 14 L1.5 12 L6 7.5 Z" fill="url(#gx)" stroke="#d8452a" stroke-width="0.6"></path></svg>
<div class="lbl" style="left:436px;top:617px"><span class="j" style="width: 24px;">移除</span></div>
<div class="lbl" style="left:1284px;top:617px"><span class="j" style="width: 60px;">已选择项目</span></div>
<div class="abs" style="left:335px;top:644px;width:1030px;height:175px;border:1px solid #a6c9e2;border-bottom:none;background:#fff"></div><div class="ghdr" style="top:645px"><div class="hc" style="left:0;width:30px"></div><div class="hc" style="left:30px;width:25px"><span class="hcb"></span></div><div class="hc" style="left:55px;width:64px;text-align:left"><span><span class="j" style="width: 52px;">标准名称</span></span></div><div class="hc" style="left:119px;width:64px;text-align:left"><span><span class="j" style="width: 52px;">项目编号</span></span></div><div class="hc" style="left:183px;width:64px;text-align:left"><span><span class="j" style="width: 52px;">测试项目</span></span></div><div class="hc" style="left:247px;width:64px;text-align:left"><span><span class="j" style="width: 52px;">标准编号</span></span></div><div class="hc" style="left:311px;width:64px;text-align:left"><span><span class="j" style="width: 52px;">检测方法</span></span></div><div class="hc" style="left:375px;width:64px;text-align:left"><span><span class="j" style="width: 52px;">适用范围</span></span></div><div class="hc" style="left:439px;width:64px;text-align:left"><span><span class="j" style="width: 65px;">方法检出限</span></span></div><div class="hc" style="left:503px;width:64px;text-align:center;padding:0 9px 0 1px"><span><span class="j" style="width: 26px;">价格</span></span></div><div class="hc" style="left:567px;width:64px;text-align:center;padding:0 9px 0 1px"><span><span class="j" style="width: 26px;">资质</span></span></div><div class="hc" style="left:631px;width:64px;text-align:center;padding:0 9px 0 1px"><span><span class="j" style="width: 26px;">上限</span></span></div><div class="hc" style="left:695px;width:64px;text-align:center;padding:0 9px 0 1px"><span><span class="j" style="width: 26px;">下限</span></span></div><div class="hc" style="left:759px;width:64px;text-align:center;padding:0 9px 0 1px"><span><span class="j" style="width: 26px;">单位</span></span></div><div class="hc" style="left:823px;width:64px;text-align:center;padding:0 9px 0 1px"><span><span class="j" style="width: 26px;">耗材</span></span></div><div class="hc" style="left:887px;width:64px;text-align:left"><span><span class="j" style="width: 52px;">分析岗位</span></span></div><div class="hc" style="left:951px;width:59px;text-align:left"><span><span class="j" style="width: 52px;">测试周期</span></span></div></div><div class="gbody" style="top:670px;height:144px"><div class="grow hi" style="top:0px"><div class="gc rn" style="left:0;width:30px">1</div><div class="gc cbc" style="left:30px;width:25px"><span class="cb on"></span></div><div class="gc c0" style="left:55px;width:64px;text-align:left"><span class="j" style="width: 72px;">广东省水污染</span></div><div class="gc lat" style="left:119px;width:64px;text-align:left">01-053-00</div><div class="gc" style="left:183px;width:64px;text-align:center"><span class="j" style="width: 48px;">硝基苯类</span></div><div class="gc lat" style="left:247px;width:64px;text-align:left">DB 44/26-</div><div class="gc lat" style="left:311px;width:64px;text-align:left">HJ 648-20</div><div class="gc" style="left:375px;width:64px;text-align:left"><span class="j" style="width: 63.4px;">地表水/地下</span></div><div class="gc" style="left:439px;width:64px;text-align:center"></div><div class="gc lat" style="left:503px;width:64px;text-align:center">0</div><div class="gc" style="left:567px;width:64px;text-align:center"><span class="j" style="width: 24px;">分包</span></div><div class="gc lat" style="left:631px;width:64px;text-align:center">2</div><div class="gc" style="left:695px;width:64px;text-align:center"></div><div class="gc lat" style="left:759px;width:64px;text-align:center">mg/l</div><div class="gc" style="left:823px;width:64px;text-align:center"><span class="j" style="width: 36px;">玻璃瓶</span></div><div class="gc mix" style="left:887px;width:64px;text-align:center"><span class="j" style="width: 28.2px;">GC岗</span></div><div class="gc lat" style="left:951px;width:59px;text-align:center">5;3</div></div></div><div class="pg" style="top:814px;height:5px"></div><div class="abs" style="left:768px;top:818px;width:20px;height:1px;background:#b5b5b5"></div><div class="abs" style="left:900px;top:818px;width:56px;height:1px;background:#a9a9a9"></div><div class="abs" style="left:338px;top:817px;width:47px;height:2px;border:1px solid #c5dbec;border-bottom:none"></div><div class="abs" style="left:701px;top:817px;width:257px;height:2px;border:1px solid #c5dbec;border-bottom:none"></div><div class="abs" style="left:336px;top:669px;width:1px;height:35px;background:#f5c93a"></div><div class="abs" style="left:784px;top:834px;width:74px;height:36px;background:#333;border:1px solid #2a2a2a;border-radius:3px;color:#fff;font-weight:bold;font-size:12px;line-height:36px;text-align:center"><span class="j" style="width: 24px;">确定</span></div>
<div class="abs" style="left:863px;top:834px;width:74px;height:36px;background:#eeeeee;border:1px solid #cfcfcf;border-radius:3px;color:#333;font-size:12px;line-height:36px;text-align:center"><span class="j" style="width: 24px;">取消</span></div>
</body></html>
